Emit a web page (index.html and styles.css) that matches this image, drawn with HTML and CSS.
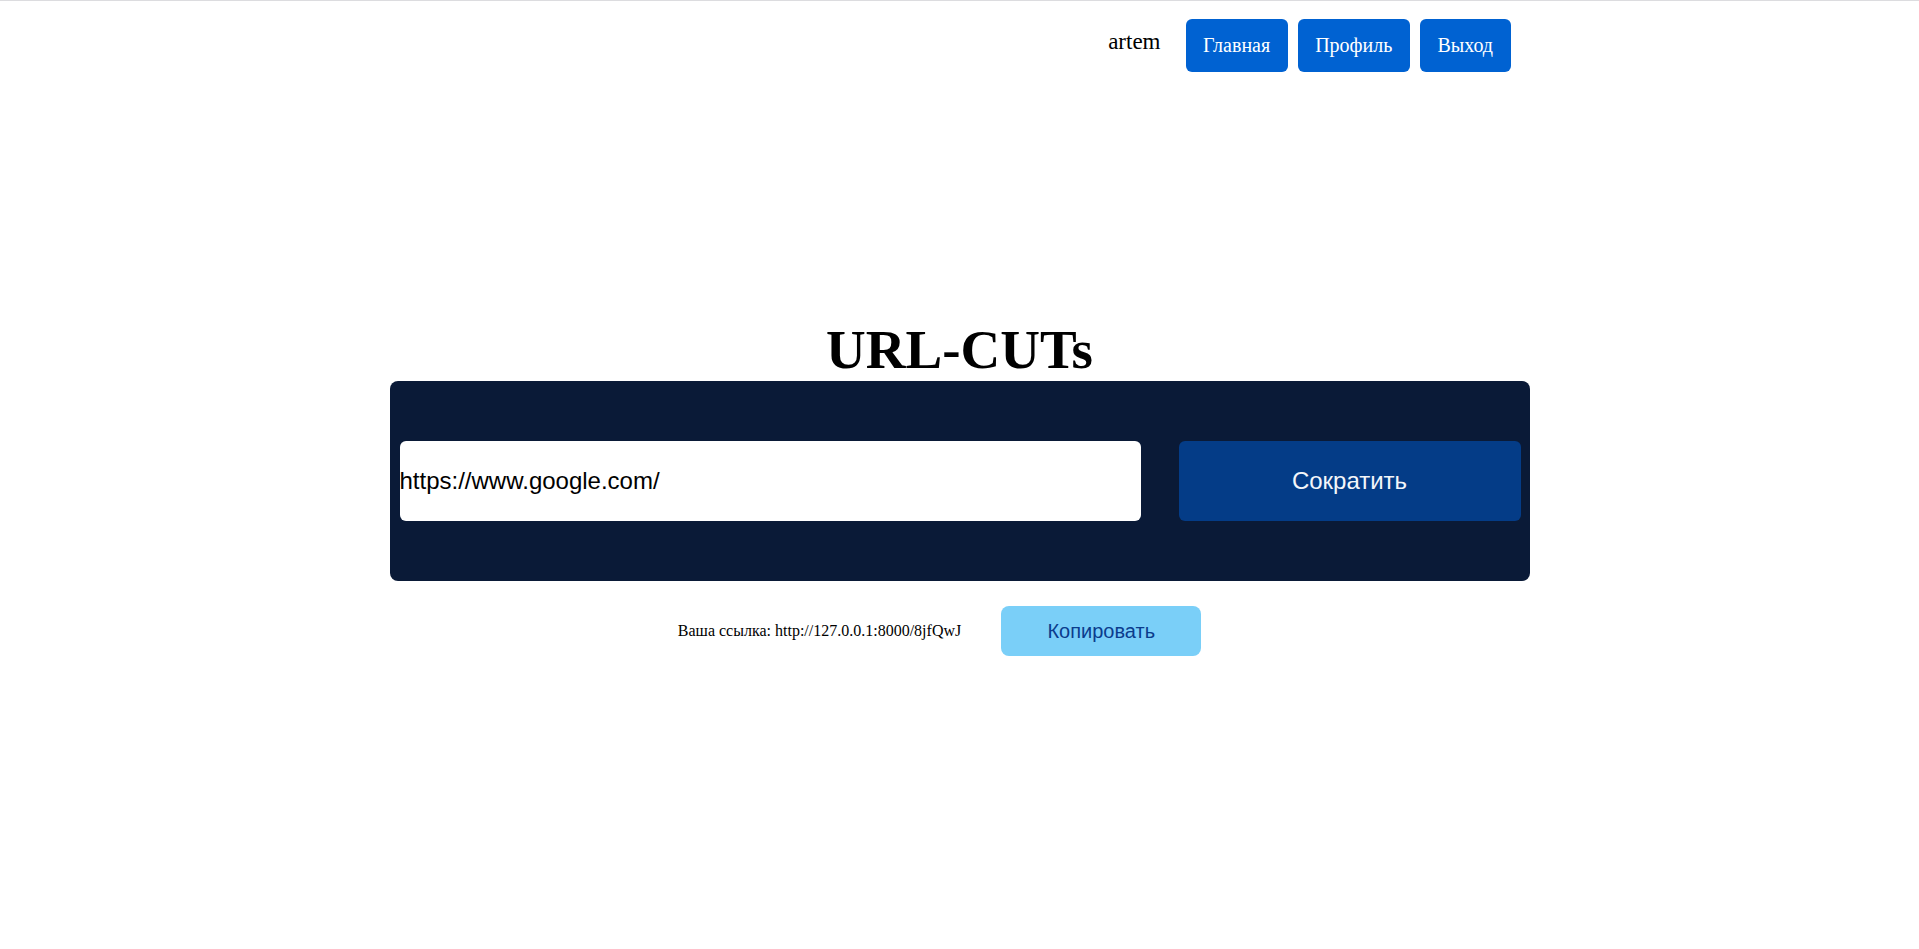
FILE: index.html
```html
<!DOCTYPE html>
<html lang="ru">
<head>
<meta charset="utf-8">
<title>URL-CUTs</title>
<link rel="stylesheet" href="styles.css">
</head>
<body>
<header class="topbar">
  <nav class="nav">
    <span class="username">artem</span>
    <a class="nav-btn" href="#">Главная</a>
    <a class="nav-btn" href="#">Профиль</a>
    <a class="nav-btn" href="#">Выход</a>
  </nav>
</header>
<main class="main">
  <h1 class="title">URL-CUTs</h1>
  <form class="panel">
    <input class="url-input" type="text" value="https://www.google.com/">
    <button class="cut-btn" type="button">Сократить</button>
  </form>
  <div class="result">
    <p class="result-text">Ваша ссылка: http://127.0.0.1:8000/8jfQwJ</p>
    <button class="copy-btn" type="button">Копировать</button>
  </div>
</main>
</body>
</html>
```
FILE: styles.css
```css
html, body {
  margin: 0;
  padding: 0;
  background: #ffffff;
}
body {
  font-family: "Liberation Serif", "Times New Roman", serif;
  color: #000;
  border-top: 1px solid #dcdcdf;
}
.topbar {
  width: 1140px;
  margin: 0 auto;
  padding-top: 18px;
}
.nav {
  display: flex;
  justify-content: flex-end;
  align-items: flex-start;
  padding-right: 19px;
}
.username {
  font-size: 23px;
  padding-top: 10px;
  margin-right: 25px;
}
.nav-btn {
  display: block;
  background: #0062d2;
  color: #ffffff;
  text-decoration: none;
  font-size: 20px;
  line-height: 23px;
  padding: 15px 17.5px;
  border-radius: 6px;
  margin-left: 10px;
}
.nav-btn:first-of-type {
  margin-left: 0;
}
.main {
  margin-top: 246px;
}
.title {
  margin: 0;
  text-align: center;
  font-size: 55px;
  font-weight: bold;
  line-height: normal;
}
.panel {
  width: 1140px;
  box-sizing: border-box;
  margin: 0 auto;
  background: #0a1a37;
  border-radius: 8px;
  padding: 60px 9px 60px 10px;
  display: flex;
  align-items: center;
  justify-content: space-between;
}
.url-input {
  width: 741px;
  height: 80px;
  box-sizing: border-box;
  border: none;
  border-radius: 6px;
  padding: 0;
  margin: 0;
  font-family: "Liberation Sans", Arial, sans-serif;
  font-size: 24px;
  color: #000;
  background: #fff;
  outline: none;
}
.cut-btn {
  width: 342px;
  height: 80px;
  border: none;
  border-radius: 6px;
  background: #043c87;
  color: #f4f6fa;
  font-family: "Liberation Sans", Arial, sans-serif;
  font-size: 24px;
  margin: 0;
  padding: 0;
}
.result {
  display: flex;
  justify-content: center;
  align-items: center;
  margin-top: 25px;
  padding-right: 40px;
}
.result-text {
  margin: 0 40px 0 0;
  font-size: 16px;
}
.copy-btn {
  width: 200px;
  height: 50px;
  border: none;
  border-radius: 8px;
  background: #7acff8;
  color: #0b3c8d;
  font-family: "Liberation Sans", Arial, sans-serif;
  font-size: 20px;
  margin: 0;
  padding: 0;
}
```
